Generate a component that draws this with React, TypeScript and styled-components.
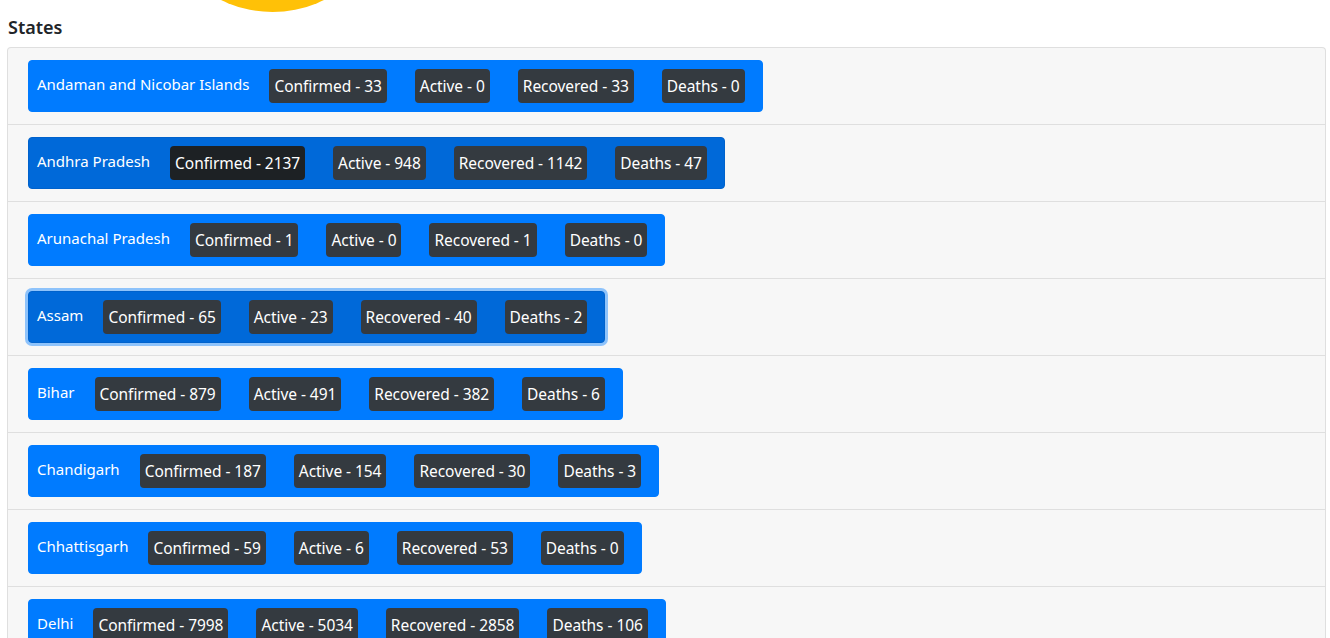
import styled, { createGlobalStyle, css } from "styled-components"

type StateRow = {
    name: string,
    confirmed: number,
    active: number,
    recovered: number,
    deaths: number,
    look?: "hover" | "focus"
}

const states: Array<StateRow> = [
    { name: "Andaman and Nicobar Islands", confirmed: 33, active: 0, recovered: 33, deaths: 0 },
    { name: "Andhra Pradesh", confirmed: 2137, active: 948, recovered: 1142, deaths: 47, look: "hover" },
    { name: "Arunachal Pradesh", confirmed: 1, active: 0, recovered: 1, deaths: 0 },
    { name: "Assam", confirmed: 65, active: 23, recovered: 40, deaths: 2, look: "focus" },
    { name: "Bihar", confirmed: 879, active: 491, recovered: 382, deaths: 6 },
    { name: "Chandigarh", confirmed: 187, active: 154, recovered: 30, deaths: 3 },
    { name: "Chhattisgarh", confirmed: 59, active: 6, recovered: 53, deaths: 0 },
    { name: "Delhi", confirmed: 7998, active: 5034, recovered: 2858, deaths: 106 },
]

const GlobalStyle = createGlobalStyle`
    body {
        margin: 0;
        background: #ffffff;
        font-family: "Noto Sans", "Open Sans", sans-serif;
        color: #212529;
    }
`

export default function App() {
    return (
        <Page>
            <GlobalStyle />
            <Banner>
                {/* bottom of the yellow logo circle, the rest is scrolled off */}
                <svg width="233" height="12" viewBox="0 221 233 12">
                    <circle cx="116.5" cy="116.5" r="116.5" fill="#ffc107" />
                </svg>
            </Banner>
            <Heading>States</Heading>
            <List>
                {states.map((s) => (
                    <Item key={s.name}>
                        <StateButton look={s.look}>
                            <Label>{s.name}</Label>
                            <Badge dark={s.look === "hover" ? true : false}>Confirmed - {s.confirmed}</Badge>
                            <Badge>Active - {s.active}</Badge>
                            <Badge>Recovered - {s.recovered}</Badge>
                            <Badge>Deaths - {s.deaths}</Badge>
                        </StateButton>
                    </Item>
                ))}
            </List>
        </Page>
    )
}

const Page = styled.div`
    padding: 0 4px 0 7px;
    height: 638px;
    overflow: hidden;
`

const Banner = styled.div`
    height: 12px;
    overflow: hidden;
    padding-left: 149px;

    svg {
        display: block;
    }
`

const Heading = styled.h5`
    margin: 3px 0 8px 1px;
    font-size: 18px;
    font-weight: 600;
    line-height: 24px;
    color: #212529;
`

const List = styled.ul`
    margin: 0;
    padding: 0;
    list-style: none;
    border: 1px solid #dfdfdf;
    border-bottom: none;
    border-radius: 4px 4px 0 0;
    background: #f7f7f7;
`

const Item = styled.li`
    padding: 12px 20px;
    border-bottom: 1px solid #dfdfdf;
`

const StateButton = styled.button<{ look?: "hover" | "focus" }>`
    display: inline-flex;
    align-items: center;
    height: 52px;
    padding: 0 9px 0 8px;
    border: 1px solid #007bff;
    border-radius: 4px;
    background: #007bff;
    color: #ffffff;
    font-family: inherit;
    cursor: pointer;

    ${props => props.look === "hover" && css`
        background: #0069d9;
        border-color: #0062cc;
    `}

    ${props => props.look === "focus" && css`
        background: #0069d9;
        border-color: #0062cc;
        box-shadow: 0 0 0 3px rgba(38, 143, 255, 0.5);
    `}
`

const Label = styled.span`
    font-size: 15px;
    line-height: 20px;
    margin-top: -4px;
    white-space: nowrap;
`

const Badge = styled.span<{ dark?: boolean }>`
    display: inline-flex;
    align-items: center;
    height: 34px;
    margin: 0 8px 0 20px;
    padding: 0 5px;
    border-radius: 4px;
    background: ${props => props.dark ? "#1d2124" : "#343a40"};
    color: #ffffff;
    font-size: 15.5px;
    letter-spacing: -0.05px;
    white-space: nowrap;
`
